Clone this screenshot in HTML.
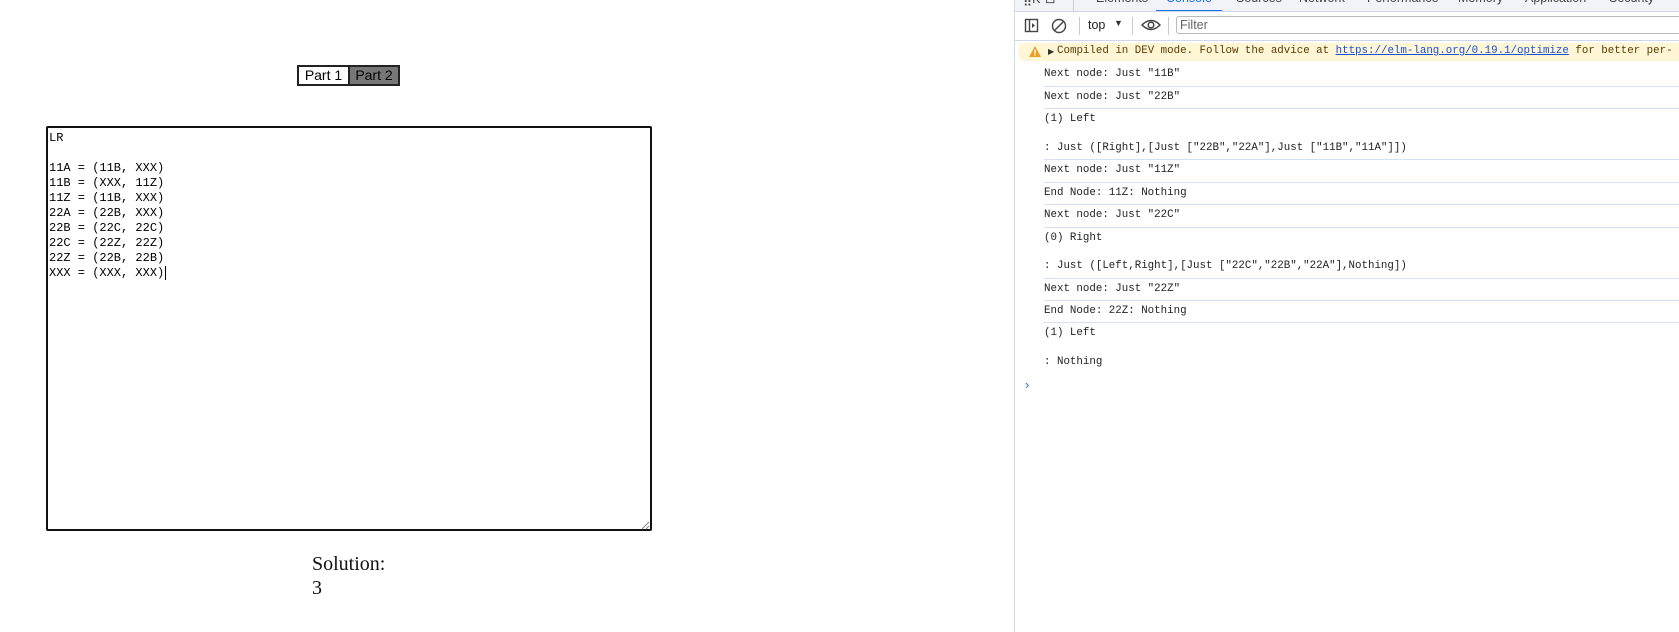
<!DOCTYPE html>
<html><head><meta charset="utf-8"><style>
*{margin:0;padding:0;box-sizing:border-box}
body{width:1679px;height:632px;background:#fff;position:relative;overflow:hidden;font-family:"Liberation Sans",sans-serif}
.abs{position:absolute}
.btn{position:absolute;top:65px;height:21px;border:2px solid #222;font:14px "Liberation Sans",sans-serif;line-height:17px;text-align:center}
#ta{left:46px;top:126px;width:606px;height:405px;border:2px solid #111;border-radius:2px;font:12px "Liberation Mono",monospace;line-height:15px;padding:3px 1px;white-space:pre;color:#000}
.sol{left:312px;font:20px "Liberation Serif",serif;color:#111}
#dt{left:1014px;top:0;width:665px;height:632px;border-left:1px solid #d6dbe6}
.tabs{position:absolute;left:0;top:0;width:665px;height:12px;background:#f1f3f9;border-bottom:1px solid #d0d7e8;overflow:hidden}
.tab{position:absolute;top:-9px;font:12.5px "Liberation Sans",sans-serif;color:#444}
.tb{position:absolute;left:0;top:12px;width:665px;height:29px;border-bottom:1px solid #d0d7e8}
.con{font:10.8px "Liberation Mono",monospace;color:#222;position:absolute;left:29px;white-space:pre}
.sep{position:absolute;left:29px;right:0;height:1px;background:#d3e0f5}
</style></head><body>
<div class="btn" style="left:297px;width:53px;background:#fff">Part 1</div>
<div class="btn" style="left:348px;width:52px;background:#777">Part 2</div>
<div id="ta" class="abs">LR

11A = (11B, XXX)
11B = (XXX, 11Z)
11Z = (11B, XXX)
22A = (22B, XXX)
22B = (22C, 22C)
22C = (22Z, 22Z)
22Z = (22B, 22B)
XXX = (XXX, XXX)<span style="border-left:1px solid #000;margin-left:1px"></span></div>
<svg class="abs" style="left:640px;top:520px" width="10" height="10"><path d="M9 2L2 9M9 6L6 9" stroke="#888" stroke-width="1"/></svg>
<div class="abs sol" style="top:552px;line-height:24px">Solution:<br>3</div>

<div id="dt" class="abs">
 <div class="tabs">
  <div class="tab" style="left:8px">⣿K</div>
  <div class="tab" style="left:30px">⊡</div>
  <div style="position:absolute;left:58px;top:0;width:1px;height:12px;background:#ccc"></div>
  <div class="tab" style="left:81px">Elements</div>
  <div class="tab" style="left:151px;color:#1a73e8">Console</div>
  <div style="position:absolute;left:141px;top:10px;width:66px;height:2px;background:#1a73e8"></div>
  <div class="tab" style="left:221px">Sources</div>
  <div class="tab" style="left:284px">Network</div>
  <div class="tab" style="left:352px">Performance</div>
  <div class="tab" style="left:443px">Memory</div>
  <div class="tab" style="left:510px">Application</div>
  <div class="tab" style="left:594px">Security</div>
 </div>
 <div class="tb">
  <svg style="position:absolute;left:9px;top:6px" width="16" height="16"><rect x="1.5" y="1.5" width="12" height="12" fill="none" stroke="#444" stroke-width="1.4"/><line x1="5.5" y1="1.5" x2="5.5" y2="13.5" stroke="#444" stroke-width="1.4"/><path d="M8 5l3 2.5L8 10z" fill="#444"/></svg>
  <svg style="position:absolute;left:36px;top:6px" width="17" height="17"><circle cx="8" cy="8" r="6.5" fill="none" stroke="#444" stroke-width="1.4"/><line x1="3.5" y1="12.5" x2="12.5" y2="3.5" stroke="#444" stroke-width="1.4"/></svg>
  <div style="position:absolute;left:64px;top:5px;width:1px;height:18px;background:#ccc"></div>
  <div style="position:absolute;left:73px;top:6px;font:12.5px 'Liberation Sans',sans-serif;color:#222">top</div>
  <div style="position:absolute;left:99px;top:6px;font:9px 'Liberation Sans',sans-serif;color:#333">▼</div>
  <div style="position:absolute;left:117px;top:5px;width:1px;height:18px;background:#ccc"></div>
  <svg style="position:absolute;left:126px;top:6px" width="20" height="14"><path d="M1 7Q10 -2 19 7Q10 16 1 7Z" fill="none" stroke="#444" stroke-width="1.5"/><circle cx="10" cy="7" r="2.8" fill="none" stroke="#444" stroke-width="1.5"/></svg>
  <div style="position:absolute;left:153px;top:5px;width:1px;height:18px;background:#ccc"></div>
  <div style="position:absolute;left:161px;top:4px;width:520px;height:18px;border:1px solid #bbb;border-radius:3px;font:12.5px 'Liberation Sans',sans-serif;color:#666;padding:1px 3px">Filter</div>
 </div>
 <div style="position:absolute;left:4px;top:43px;width:670px;height:18px;background:#fef6d5;border-radius:4px"></div>
 <svg style="position:absolute;left:13px;top:45px" width="14" height="13"><path d="M7 1L13 12H1Z" fill="#e8a020"/><rect x="6.3" y="4.5" width="1.4" height="4" fill="#fff"/><rect x="6.3" y="9.3" width="1.4" height="1.4" fill="#fff"/></svg>
 <div style="position:absolute;left:33px;top:47px;font:8px sans-serif;color:#333">▶</div>
 <div class="con" style="left:42px;top:45px;color:#5c3b00">Compiled in DEV mode. Follow the advice at <span style="color:#1a4fd8;text-decoration:underline">https://elm-lang.org/0.19.1/optimize</span> for better per-</div>
 <div class="con" style="top:68px">Next node: Just "11B"</div><div class="sep" style="top:86px"></div>
 <div class="con" style="top:91px">Next node: Just "22B"</div><div class="sep" style="top:108px"></div>
 <div class="con" style="top:113px">(1) Left</div>
 <div class="con" style="top:142px">: Just ([Right],[Just ["22B","22A"],Just ["11B","11A"]])</div><div class="sep" style="top:159px"></div>
 <div class="con" style="top:164px">Next node: Just "11Z"</div><div class="sep" style="top:182px"></div>
 <div class="con" style="top:187px">End Node: 11Z: Nothing</div><div class="sep" style="top:204px"></div>
 <div class="con" style="top:209px">Next node: Just "22C"</div><div class="sep" style="top:227px"></div>
 <div class="con" style="top:232px">(0) Right</div>
 <div class="con" style="top:260px">: Just ([Left,Right],[Just ["22C","22B","22A"],Nothing])</div><div class="sep" style="top:278px"></div>
 <div class="con" style="top:283px">Next node: Just "22Z"</div><div class="sep" style="top:300px"></div>
 <div class="con" style="top:305px">End Node: 22Z: Nothing</div><div class="sep" style="top:322px"></div>
 <div class="con" style="top:327px">(1) Left</div>
 <div class="con" style="top:356px">: Nothing</div>
 <div style="position:absolute;left:10px;top:377px;font:13px 'Liberation Sans',sans-serif;color:#1a73e8">›</div>
</div>
</body></html>
